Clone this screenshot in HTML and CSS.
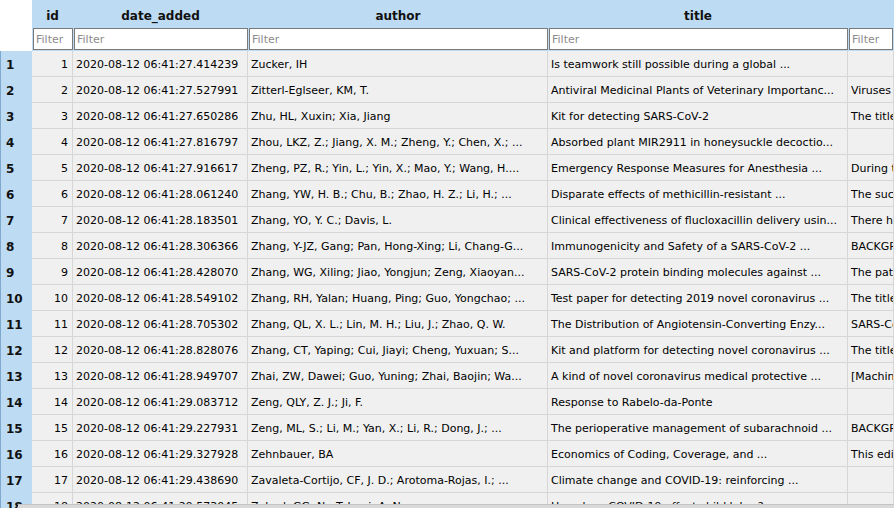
FILE: index.html
```html
<!DOCTYPE html>
<html>
<head>
<meta charset="utf-8">
<link rel="stylesheet" href="styles.css">
</head>
<body>
<div class="grid">
  <div class="row head">
    <div class="corner"></div>
    <div class="hcell">id</div>
    <div class="hcell">date_added</div>
    <div class="hcell">author</div>
    <div class="hcell">title</div>
    <div class="hcell"></div>
  </div>
  <div class="row filters">
    <div class="corner"></div>
    <div class="fcell"><div class="fbox">Filter</div></div>
    <div class="fcell"><div class="fbox">Filter</div></div>
    <div class="fcell"><div class="fbox">Filter</div></div>
    <div class="fcell"><div class="fbox">Filter</div></div>
    <div class="fcell"><div class="fbox last">Filter</div></div>
  </div>

  <div class="row data"><div class="rh">1</div><div class="c num">1</div><div class="c">2020-08-12 06:41:27.414239</div><div class="c">Zucker, IH</div><div class="c">Is teamwork still possible during a global ...</div><div class="c"></div></div>
  <div class="row data"><div class="rh">2</div><div class="c num">2</div><div class="c">2020-08-12 06:41:27.527991</div><div class="c">Zitterl-Eglseer, KM, T.</div><div class="c">Antiviral Medicinal Plants of Veterinary Importanc...</div><div class="c">Viruses are</div></div>
  <div class="row data"><div class="rh">3</div><div class="c num">3</div><div class="c">2020-08-12 06:41:27.650286</div><div class="c">Zhu, HL, Xuxin; Xia, Jiang</div><div class="c">Kit for detecting SARS-CoV-2</div><div class="c">The title</div></div>
  <div class="row data"><div class="rh">4</div><div class="c num">4</div><div class="c">2020-08-12 06:41:27.816797</div><div class="c">Zhou, LKZ, Z.; Jiang, X. M.; Zheng, Y.; Chen, X.; ...</div><div class="c">Absorbed plant MIR2911 in honeysuckle decoctio...</div><div class="c"></div></div>
  <div class="row data"><div class="rh">5</div><div class="c num">5</div><div class="c">2020-08-12 06:41:27.916617</div><div class="c">Zheng, PZ, R.; Yin, L.; Yin, X.; Mao, Y.; Wang, H....</div><div class="c">Emergency Response Measures for Anesthesia ...</div><div class="c">During the</div></div>
  <div class="row data"><div class="rh">6</div><div class="c num">6</div><div class="c">2020-08-12 06:41:28.061240</div><div class="c">Zhang, YW, H. B.; Chu, B.; Zhao, H. Z.; Li, H.; ...</div><div class="c">Disparate effects of methicillin-resistant ...</div><div class="c">The success</div></div>
  <div class="row data"><div class="rh">7</div><div class="c num">7</div><div class="c">2020-08-12 06:41:28.183501</div><div class="c">Zhang, YO, Y. C.; Davis, L.</div><div class="c">Clinical effectiveness of flucloxacillin delivery usin...</div><div class="c">There have</div></div>
  <div class="row data"><div class="rh">8</div><div class="c num">8</div><div class="c">2020-08-12 06:41:28.306366</div><div class="c">Zhang, Y-JZ, Gang; Pan, Hong-Xing; Li, Chang-G...</div><div class="c">Immunogenicity and Safety of a SARS-CoV-2 ...</div><div class="c">BACKGROUND</div></div>
  <div class="row data"><div class="rh">9</div><div class="c num">9</div><div class="c">2020-08-12 06:41:28.428070</div><div class="c">Zhang, WG, Xiling; Jiao, Yongjun; Zeng, Xiaoyan...</div><div class="c">SARS-CoV-2 protein binding molecules against ...</div><div class="c">The patent</div></div>
  <div class="row data"><div class="rh">10</div><div class="c num">10</div><div class="c">2020-08-12 06:41:28.549102</div><div class="c">Zhang, RH, Yalan; Huang, Ping; Guo, Yongchao; ...</div><div class="c">Test paper for detecting 2019 novel coronavirus ...</div><div class="c">The title</div></div>
  <div class="row data"><div class="rh">11</div><div class="c num">11</div><div class="c">2020-08-12 06:41:28.705302</div><div class="c">Zhang, QL, X. L.; Lin, M. H.; Liu, J.; Zhao, Q. W.</div><div class="c">The Distribution of Angiotensin-Converting Enzy...</div><div class="c">SARS-CoV-2</div></div>
  <div class="row data"><div class="rh">12</div><div class="c num">12</div><div class="c">2020-08-12 06:41:28.828076</div><div class="c">Zhang, CT, Yaping; Cui, Jiayi; Cheng, Yuxuan; S...</div><div class="c">Kit and platform for detecting novel coronavirus ...</div><div class="c">The title</div></div>
  <div class="row data"><div class="rh">13</div><div class="c num">13</div><div class="c">2020-08-12 06:41:28.949707</div><div class="c">Zhai, ZW, Dawei; Guo, Yuning; Zhai, Baojin; Wa...</div><div class="c">A kind of novel coronavirus medical protective ...</div><div class="c">[Machine</div></div>
  <div class="row data"><div class="rh">14</div><div class="c num">14</div><div class="c">2020-08-12 06:41:29.083712</div><div class="c">Zeng, QLY, Z. J.; Ji, F.</div><div class="c">Response to Rabelo-da-Ponte</div><div class="c"></div></div>
  <div class="row data"><div class="rh">15</div><div class="c num">15</div><div class="c">2020-08-12 06:41:29.227931</div><div class="c">Zeng, ML, S.; Li, M.; Yan, X.; Li, R.; Dong, J.; ...</div><div class="c">The perioperative management of subarachnoid ...</div><div class="c">BACKGROUND</div></div>
  <div class="row data"><div class="rh">16</div><div class="c num">16</div><div class="c">2020-08-12 06:41:29.327928</div><div class="c">Zehnbauer, BA</div><div class="c">Economics of Coding, Coverage, and ...</div><div class="c">This editorial</div></div>
  <div class="row data"><div class="rh">17</div><div class="c num">17</div><div class="c">2020-08-12 06:41:29.438690</div><div class="c">Zavaleta-Cortijo, CF, J. D.; Arotoma-Rojas, I.; ...</div><div class="c">Climate change and COVID-19: reinforcing ...</div><div class="c"></div></div>
  <div class="row data"><div class="rh">18</div><div class="c num">18</div><div class="c">2020-08-12 06:41:29.573045</div><div class="c">Zahed, GG, N.; Talemi, A. N.</div><div class="c">How does COVID-19 affect child labor?</div><div class="c"></div></div>
</div>
<div class="hscroll"></div>
</body>
</html>
```

FILE: styles.css
```css
html, body {
  margin: 0;
  padding: 0;
  width: 894px;
  height: 508px;
  overflow: hidden;
  background: #ffffff;
}

.grid {
  display: flex;
  flex-direction: column;
  font-family: "DejaVu Sans", Verdana, sans-serif;
  font-size: 11px;
  color: #000000;
}

.row {
  display: grid;
  grid-template-columns: 32px 41px 175px 300px 300px 46px;
  flex: none;
}

.corner {
  background: #ffffff;
}

.head {
  height: 28px;
}

.hcell {
  background: #bddcf3;
  font-weight: bold;
  font-size: 12px;
  display: flex;
  align-items: center;
  justify-content: center;
  padding-top: 4px;
  box-sizing: border-box;
  color: #111;
}

.filters {
  height: 23px;
}

.fcell {
  background: #bddcf3;
  padding: 0 0 1px 1px;
  box-sizing: border-box;
  display: flex;
}

.fbox {
  flex: 1;
  background: #ffffff;
  border: 1px solid #7a7a7a;
  color: #8c8c8c;
  display: flex;
  align-items: center;
  padding-left: 2px;
  font-size: 11px;
  overflow: hidden;
}

.fbox.last {
  margin-right: 1px;
}

.data {
  height: 26px;
}

.rh {
  background: #bddcf3;
  box-shadow: inset 1px 0 0 #7fa9cc;
  font-weight: bold;
  font-size: 12px;
  display: flex;
  align-items: center;
  padding: 2px 0 0 6px;
  box-sizing: border-box;
  color: #111;
}

.c {
  background: #f0f0f0;
  border-right: 1px solid #d6d6d6;
  border-bottom: 1px solid #d6d6d6;
  box-sizing: border-box;
  padding: 1px 3px 0 3px;
  display: flex;
  align-items: center;
  white-space: nowrap;
  overflow: hidden;
}

.c.num {
  justify-content: flex-end;
  padding-right: 4px;
}

.hscroll {
  position: fixed;
  left: 18px;
  right: 0;
  bottom: 0;
  height: 3px;
  background: #dadada;
  border-top: 1px solid #c4c4c4;
}
```
